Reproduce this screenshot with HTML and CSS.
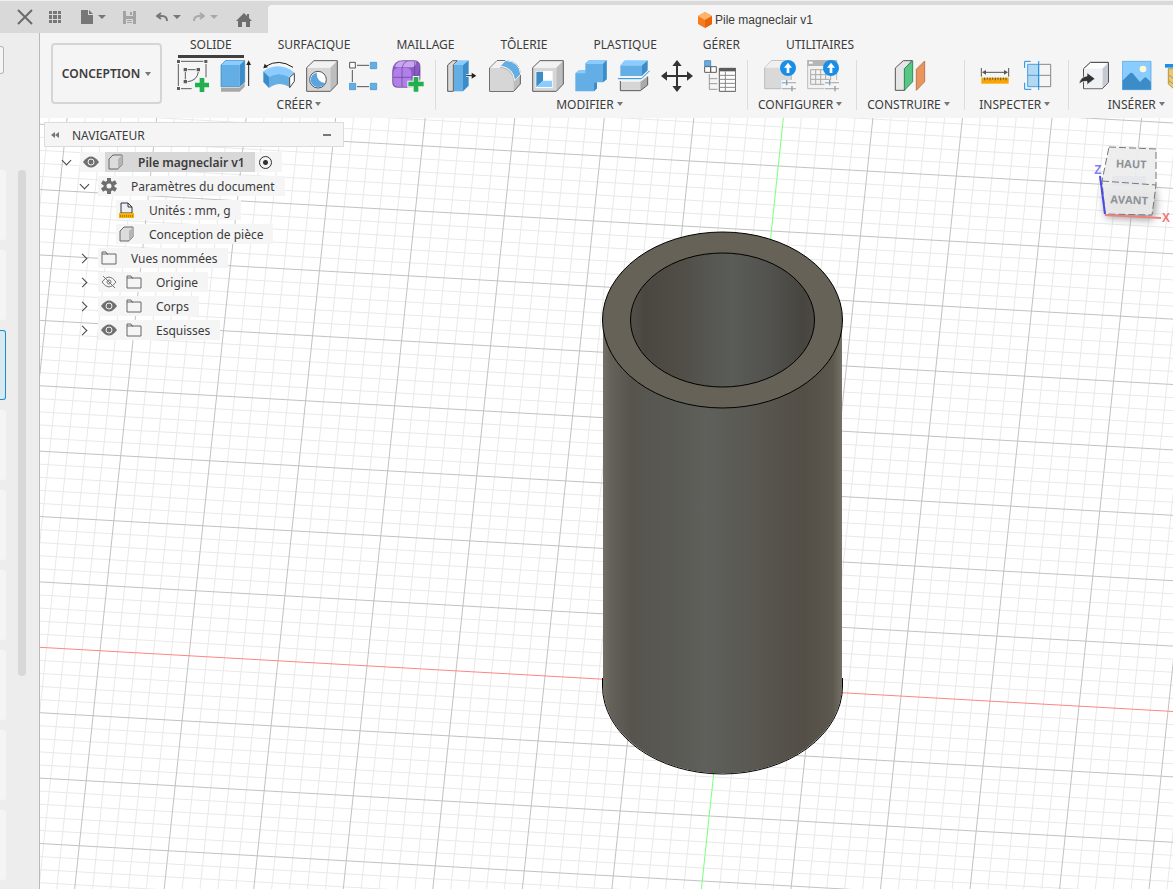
FILE: index.html
```html
<!DOCTYPE html>
<html lang="fr">

<head>
    <meta charset="UTF-8">
    <title>Pile magneclair v1</title>
    <link rel="stylesheet" href="styles.css">
</head>

<body>
    <header class="topbar">
        <div class="quick">
            <button class="quick-btn close" aria-label="Fermer"><svg width="16" height="16" viewBox="0 0 16 16"><path d="M1 1L15 15M15 1L1 15" fill="none" stroke="#6b6b6b" stroke-width="2"/></svg></button>
            <button class="quick-btn apps" aria-label="Applications"><svg width="14" height="14" viewBox="0 0 14 14"><path d="M1 1h3v3H1zM5 1h4v3H5zM10 1h3v3h-3zM1 5h3v4H1zM5 5h4v4H5zM10 5h3v4h-3zM1 10h3v3H1zM5 10h4v3H5zM10 10h3v3h-3z" fill="#777"/></svg></button>
            <button class="quick-btn file" aria-label="Fichier"><svg width="12" height="14" viewBox="0 0 12 14"><path d="M0 0h7v5h5v9H0zM8 0l4 4H8z" fill="#777"/></svg><i class="caret"></i></button>
            <button class="quick-btn save" aria-label="Enregistrer"><svg width="13" height="13" viewBox="0 0 13 13"><path d="M0 0h13v13H0z" fill="#a3a3a3"/><path d="M3 0h7v5H3zM3 8h7v5H3z" fill="#d9d9d9"/><path d="M7 1h2v3H7zM4 9h5v1H4zM4 11h5v1H4z" fill="#a3a3a3"/></svg></button>
            <button class="quick-btn undo" aria-label="Annuler"><svg width="12" height="10" viewBox="0 0 12 10"><path d="M5 1L1 4l4 3M1 4h5q5 0 5 5" fill="none" stroke="#777" stroke-width="2"/></svg><i class="caret"></i></button>
            <button class="quick-btn redo" aria-label="Rétablir"><svg width="12" height="10" viewBox="0 0 12 10"><path d="M7 1l4 3-4 3M11 4H6Q1 4 1 9" fill="none" stroke="#a8a8a8" stroke-width="2"/></svg><i class="caret light"></i></button>
            <button class="quick-btn home" aria-label="Accueil"><svg width="16" height="14" viewBox="0 0 16 14"><path d="M8 0l3 3V1h2v4l3 3h-2v6h-4V9H6v5H2V8H0z" fill="#6e6e6e"/></svg></button>
        </div>
        <div class="doc-tab">
            <svg width="14" height="16" viewBox="0 0 14 16"><path d="M7 0l7 4v8l-7 4-7-4V4z" fill="#f47b20"/><path d="M7 0l7 4-7 4-7-4z" fill="#ffb36b"/><path d="M7 8l7-4v8l-7 4z" fill="#e8630a"/></svg>
            <h1>Pile magneclair v1</h1>
        </div>
    </header>

    <div class="app">
        <aside class="data-panel">
            <input type="text" class="search" aria-label="Rechercher">
            <div class="files">
                <ul class="cards">
                    <li></li>
                    <li></li>
                    <li class="selected"></li>
                    <li></li>
                    <li></li>
                    <li></li>
                    <li></li>
                    <li></li>
                    <li></li>
                </ul>
                <div class="scroll"></div>
            </div>
        </aside>

        <main>
            <div class="toolbar">
                <button class="workspace">CONCEPTION <i class="caret"></i></button>
                <div class="ribbon">
                    <nav>
                        <button class="active">SOLIDE</button>
                        <button>SURFACIQUE</button>
                        <button>MAILLAGE</button>
                        <button>TÔLERIE</button>
                        <button>PLASTIQUE</button>
                        <button>GÉRER</button>
                        <button>UTILITAIRES</button>
                    </nav>
                    <div class="groups">
                        <section class="group">
                            <div class="tools">
                                <button aria-label="Créer une esquisse"><svg viewBox="0 0 96 96"><path d="M4 12v66M12 4h67M87 12v40M12 86h32M25 36v22M32 29h24M64 36q-4 26-32 29" fill="none" stroke="#5c5c5c" stroke-width="3"/><path d="M0 0h9v9H0zM82 0h9v9h-9zM0 81h9v9H0zM20 24h10v10H20zM59 24h10v10H59zM20 60h10v10H20z" fill="#5c5c5c"/><path d="M68 54h14v14h14v14H82v14H68V82H54V68h14z" fill="#22b04f"/></svg></button>
                                <button aria-label="Extrusion"><svg viewBox="0 0 96 96"><path d="M3 83h56l15-15v12L59 95H3z" fill="#a8a8a8"/><path d="M3 15h56v65H3z" fill="#64aee6"/><path d="M3 15L17 1h57L59 15z" fill="#8accff"/><path d="M59 15L74 1v65L59 80z" fill="#3c8cc8"/><path d="M3 80V15L17 1h57v65L59 80z" fill="none" stroke="#3580b8" stroke-width="2"/><path d="M86 78V14" stroke="#222" stroke-width="3"/><path d="M86 1l7 14H79z" fill="#222"/></svg></button>
                                <button aria-label="Révolution"><svg viewBox="0 0 96 96"><path d="M90 22Q48-6 8 19" fill="none" stroke="#222" stroke-width="3"/><path d="M1 25L5 11l10 11z" fill="#222"/><path d="M1 34Q48 2 95 38L78 50Q48 34 18 50z" fill="#8accff"/><path d="M18 50Q48 34 78 50v30Q48 62 18 84z" fill="#64aee6"/><path d="M1 34l17 16v34L1 66z" fill="#3c8cc8"/><path d="M80 52l14-12v24L80 83z" fill="#fff" stroke="#444" stroke-width="3"/></svg></button>
                                <button aria-label="Perçage"><svg viewBox="0 0 96 96"><path d="M2 23h71v71H2z" fill="#d6d6d6"/><path d="M2 23L24 2h70L73 23z" fill="#f2f2f2"/><path d="M73 23L94 2v70L73 94z" fill="#bdbdbd"/><path d="M2 94V23L24 2h70v70L73 94z" fill="none" stroke="#5c5c5c" stroke-width="3"/><circle cx="36" cy="59" r="25" fill="#fff" stroke="#555" stroke-width="3"/><path d="M32 38q0 28 26 32-8 12-24 11-18-3-20-21 1-18 18-22z" fill="#5aa5e0"/></svg></button>
                                <button aria-label="Réseau"><svg viewBox="0 0 96 96"><path d="M24 16h36M10 30v36M24 80h36" stroke="#555" stroke-width="3"/><path d="M2 7h17v17H2z" fill="#fff" stroke="#555" stroke-width="3"/><path d="M64 7h19v19H64zM1 70h19v19H1zM64 70h19v19H64z" fill="#64aee6" stroke="#3c8cc8" stroke-width="2"/></svg></button>
                                <button aria-label="Créer une forme"><svg viewBox="0 0 96 96"><path d="M2 34Q3 2 32 2h34q18 0 18 18v34q0 28-28 28H16Q2 82 2 66z" fill="#8b5cc4" stroke="#64408f" stroke-width="2"/><path d="M9 20Q14 4 32 4h32q10 0 8 6-2 12-14 12H18z" fill="#c9a6f2"/><rect x="4" y="24" width="54" height="56" rx="14" fill="#b07fea"/><path d="M30 24v56M4 52h54Q82 50 83 30M30 24Q32 8 46 3M68 6v66" fill="none" stroke="#64408f" stroke-width="2"/><path d="M62 48h20v14h14v21H82v13H62V83H46V62h16z" fill="#f5f5f5"/><path d="M65 51h14v14h16v14H79v16H65V79H49V65h16z" fill="#22b04f"/></svg></button>
                            </div>
                            <button class="menu">CRÉER<i class="caret"></i></button>
                        </section>
                        <section class="group">
                            <div class="tools">
                                <button aria-label="Appuyer/Tirer"><svg viewBox="0 0 96 96"><path d="M5 94V15L20 2h14L22 15v79z" fill="#d9d9d9" stroke="#5c5c5c" stroke-width="3"/><path d="M24 15h27v79H24z" fill="#64aee6"/><path d="M24 15L38 1h30L51 15z" fill="#8accff"/><path d="M51 15L68 1v76L51 94z" fill="#3c8cc8"/><path d="M60 47h20" stroke="#fff" stroke-width="8"/><path d="M60 47h20" stroke="#222" stroke-width="3"/><path d="M77 38l14 9-14 9z" fill="#222"/></svg></button>
                                <button aria-label="Congé"><svg viewBox="0 0 96 96"><path d="M2 94V24L24 2h28q42 4 42 42v28L74 94z" fill="#bdbdbd" stroke="#5c5c5c" stroke-width="3"/><path d="M3 24L24 3h22L32 24z" fill="#f2f2f2"/><path d="M3 24h30q40 4 41 46v23H3z" fill="#d6d6d6"/><path d="M34 18L50 1q42 4 45 42L77 62Q74 24 34 18z" fill="#64aee6" stroke="#f5f5f5" stroke-width="3"/></svg></button>
                                <button aria-label="Coque"><svg viewBox="0 0 96 96"><path d="M2 23h71v71H2z" fill="#d6d6d6"/><path d="M2 23L24 2h70L73 23z" fill="#f2f2f2"/><path d="M73 23L94 2v70L73 94z" fill="#bdbdbd"/><path d="M2 94V23L24 2h70v70L73 94z" fill="none" stroke="#5c5c5c" stroke-width="3"/><path d="M11 33h51v51H11z" fill="#fff"/><path d="M13 35h20v27L13 81z" fill="#3c8cc8"/><path d="M33 62h27v19H13z" fill="#8accff"/></svg></button>
                                <button aria-label="Combiner"><svg viewBox="0 0 96 96"><path d="M1 40l11-9h19V10L42 1h53v57L84 67H66v18l-9 9H1z" fill="#64aee6"/><path d="M1 40l11-9h19v9zM31 10L42 1h53L84 12H31z" fill="#8accff"/><path d="M84 12L95 1v57L84 67zM57 68h9v17l-9 9z" fill="#3c8cc8"/></svg></button>
                                <button aria-label="Scinder"><svg viewBox="0 0 96 96"><path d="M7 65h60v28H7z" fill="#d6d6d6"/><path d="M67 65l22-16v26L67 93z" fill="#aaa"/><path d="M7 63v29h60l22-17V50" fill="none" stroke="#5c5c5c" stroke-width="3"/><path d="M7 16L20 1h69L72 16z" fill="#8accff"/><path d="M7 16h65v32H7z" fill="#64aee6"/><path d="M72 16L89 1v31L72 48z" fill="#3c8cc8"/><path d="M0 56h71l24-24" fill="none" stroke="#f5f5f5" stroke-width="9"/><path d="M0 56h71l24-24" fill="none" stroke="#1a8ee6" stroke-width="3"/></svg></button>
                                <button aria-label="Déplacer"><svg viewBox="0 0 96 96"><path d="M48 14v68M14 48h68" stroke="#333" stroke-width="6"/><path d="M48 0l14 18H34zM48 96L34 78h28zM0 48l18-14v28zM96 48L78 62V34z" fill="#333"/></svg></button>
                                <button aria-label="Paramètres"><svg viewBox="0 0 96 96"><path d="M2 20h18v17H2zM20 20h17v17H20z" fill="#fff" stroke="#5c5c5c" stroke-width="3"/><path d="M2 2h18v17H2z" fill="#64aee6" stroke="#3c6c98" stroke-width="2"/><path d="M16 42v46M16 56h24M16 71h24M16 88h24" stroke="#999" stroke-width="3"/><path d="M46 25h49v69H46z" fill="#fff" stroke="#5c5c5c" stroke-width="3"/><path d="M46 24h49v10H46z" fill="#5c5c5c"/><path d="M46 46h48M46 58h48M46 70h48M46 82h48M64 34v60" stroke="#888" stroke-width="3"/></svg></button>
                            </div>
                            <button class="menu">MODIFIER<i class="caret"></i></button>
                        </section>
                        <section class="group">
                            <div class="tools">
                                <button aria-label="Configurer"><svg viewBox="0 0 96 96"><path d="M2 86V24L22 2h40v22h20v62z" fill="#d9d9d9" stroke="#bbb" stroke-width="3"/><path d="M3 23L22 3h40v20z" fill="#f0f0f0"/><path d="M52 60h44v36H52z" fill="#f5f5f5"/><path d="M54 68h42M54 86h42" stroke="#b5b5b5" stroke-width="4"/><path d="M54 68h14" stroke="#7cc0f5" stroke-width="4"/><path d="M68 60v16M84 78v16" stroke="#999" stroke-width="4"/><circle cx="72" cy="24" r="24" fill="#1a8ee6"/><path d="M72 8l12 15h-8v16h-8V23h-8z" fill="#fff"/></svg></button>
                                <button aria-label="Tableau de configuration"><svg viewBox="0 0 96 96"><path d="M2 2h87v84H2z" fill="#f2f2f2" stroke="#bbb" stroke-width="3"/><path d="M1 0h89v18H1z" fill="#b5b5b5"/><path d="M6 5h11v6H6z" fill="#fff"/><path d="M11 29h60v44H11zM11 44h60M11 58h60M26 29v44M41 29v44M56 29v44" fill="none" stroke="#aaa" stroke-width="3"/><path d="M52 60h44v36H52z" fill="#f5f5f5"/><path d="M54 68h42M54 86h42" stroke="#b5b5b5" stroke-width="4"/><path d="M54 68h14" stroke="#7cc0f5" stroke-width="4"/><path d="M68 60v16M84 78v16" stroke="#999" stroke-width="4"/><circle cx="72" cy="24" r="24" fill="#1a8ee6"/><path d="M72 8l12 15h-8v16h-8V23h-8z" fill="#fff"/></svg></button>
                            </div>
                            <button class="menu">CONFIGURER<i class="caret"></i></button>
                        </section>
                        <section class="group">
                            <div class="tools">
                                <button aria-label="Plan de décalage"><svg viewBox="0 0 96 96"><path d="M4 91V24L28 2h26L32 26v65z" fill="#e6e6e6" stroke="#555" stroke-width="3"/><path d="M31 26L56 2v63L31 91z" fill="#57c785" stroke="#36895a" stroke-width="3"/><path d="M67 28L92 3v62L67 91z" fill="#ea9560" stroke="#b97950" stroke-width="3"/></svg></button>
                            </div>
                            <button class="menu">CONSTRUIRE<i class="caret"></i></button>
                        </section>
                        <section class="group wide">
                            <div class="tools">
                                <button aria-label="Mesurer"><svg viewBox="0 0 96 96"><path d="M7 24v26M89 24v26M14 37h68" stroke="#555" stroke-width="3"/><path d="M9 37l12-7v14zM87 37l-12-7v14z" fill="#555"/><path d="M7 53h82v18H7z" fill="#f9a602"/><path d="M17 53v8M25 53v6M33 53v8M41 53v6M49 53v8M57 53v6M65 53v8M73 53v6M81 53v8" stroke="#555" stroke-width="3"/></svg></button>
                                <button aria-label="Analyse de section"><svg viewBox="0 0 96 96"><path d="M50 13h36v67H50M50 46h36" fill="none" stroke="#888" stroke-width="3"/><path d="M17 13h33v67H17z" fill="#b3d8f2" stroke="#4a9fdc" stroke-width="3"/><path d="M17 46h33" stroke="#4a9fdc" stroke-width="3"/><path d="M50 3v87M26 4H8v20M8 68v20h20" fill="none" stroke="#1a8ee6" stroke-width="3"/></svg></button>
                            </div>
                            <button class="menu">INSPECTER<i class="caret"></i></button>
                        </section>
                        <section class="group last">
                            <div class="tools">
                                <button aria-label="Insérer un composant"><svg viewBox="0 0 96 96"><path d="M14 86V26L34 7h54v60L70 86z" fill="#fff" stroke="#333" stroke-width="3"/><path d="M70 26L87 9v58L70 85z" fill="#c5c9d2"/><path d="M15 26h55v59H15z" fill="#f0f1f4"/><path d="M0 72Q4 50 24 48V38l24 18-24 18V64Q10 62 0 72z" fill="#333" stroke="#f5f5f5" stroke-width="2"/></svg></button>
                                <button aria-label="Insérer une image"><svg viewBox="0 0 96 96"><path d="M1 4h86v85H1z" fill="#8accff"/><path d="M1 62L24 40q4-4 8 0l22 26 12-12q4-4 8 0l13 12v23H1z" fill="#3c8cc8"/><path d="M1 4h86v85H1z" fill="none" stroke="#4a9fdc" stroke-width="2"/><circle cx="63" cy="27" r="10" fill="#fffad1"/></svg></button>
                                <button aria-label="Insérer McMaster-Carr"><svg viewBox="0 0 96 96"><path d="M10 26h70v46L60 90H30L10 72z" fill="#e8c877" stroke="#b89540" stroke-width="3"/><path d="M12 46l20 14M12 62l24 18" stroke="#b89540" stroke-width="3"/><path d="M0 12h90v11H0z" fill="#1a8ee6"/></svg></button>
                            </div>
                            <button class="menu">INSÉRER<i class="caret"></i></button>
                        </section>
                    </div>
                </div>
            </div>

            <div class="canvas">
                <svg class="scene" role="img" aria-label="Vue 3D">
                    <defs>
                        <linearGradient id="outside">
                            <stop offset="0" stop-color="#757166"/>
                            <stop offset=".03" stop-color="#65625a"/>
                            <stop offset=".12" stop-color="#57544e"/>
                            <stop offset=".3" stop-color="#5a5a54"/>
                            <stop offset=".43" stop-color="#5f605b"/>
                            <stop offset=".6" stop-color="#5a5953"/>
                            <stop offset=".84" stop-color="#534e46"/>
                            <stop offset=".96" stop-color="#5c584e"/>
                            <stop offset="1" stop-color="#757166"/>
                        </linearGradient>
                        <linearGradient id="inside">
                            <stop offset="0" stop-color="#53504a"/>
                            <stop offset=".08" stop-color="#4a4741"/>
                            <stop offset=".25" stop-color="#504c46"/>
                            <stop offset=".4" stop-color="#555550"/>
                            <stop offset=".55" stop-color="#5a5c58"/>
                            <stop offset=".75" stop-color="#52524e"/>
                            <stop offset=".94" stop-color="#474540"/>
                            <stop offset="1" stop-color="#4c4a45"/>
                        </linearGradient>
                    </defs>
                    <path class="minor" id="minor"/>
                    <path class="major" id="major"/>
                    <path class="axis-x" id="axisX"/>
                    <path class="axis-y" id="axisY"/>
                    <!-- the tube -->
                    <path d="M563 202V568A119 87 0 0 0 802 568V202z" fill="url(#outside)"/>
                    <path d="M562.500 560V568A120 88 0 0 0 802.500 568V560" class="edge"/>
                    <ellipse cx="682.500" cy="202" rx="120" ry="88" fill="#676257" class="edge"/>
                    <ellipse cx="682.500" cy="202" rx="92" ry="67" fill="url(#inside)" class="edge"/>
                </svg>

                <section class="browser">
                    <div class="browser-head">
                        <svg width="8" height="6" viewBox="0 0 8 6"><path d="M4 0v6L0 3zM8 0v6L4 3z" fill="#777"/></svg>
                        <h2>NAVIGATEUR</h2>
                        <button class="minimize" aria-label="Réduire"></button>
                    </div>
                    <ul class="tree">
                        <li class="level-0">
                            <button class="toggle open" aria-label="Replier"></button>
                            <div class="node root">
                                <svg class="eye" viewBox="0 0 16 12"><path d="M0 6Q8-5 16 6 8 17 0 6z" fill="#6f6f6f"/><circle cx="8" cy="6" r="3" fill="#6f6f6f" stroke="#f5f5f5"/></svg>
                                <label class="current" for="activate"><svg class="icon" viewBox="0 0 16 16"><path d="M1 5l4-4h9v10l-4 4H1z" fill="#dcdcdc" stroke="#666" stroke-linejoin="round"/><path d="M10 5l4-4v10l-4 4z" fill="#b5b5b5"/></svg>Pile magneclair v1</label>
                                <input type="radio" id="activate" checked>
                            </div>
                        </li>
                        <li class="level-1">
                            <button class="toggle open" aria-label="Replier"></button>
                            <div class="node"><svg class="icon" viewBox="0 0 16 16"><path d="M8 0v16M1 4l14 8M15 4L1 12" stroke="#6f6f6f" stroke-width="4"/><circle cx="8" cy="8" r="4" fill="#f5f5f5" stroke="#6f6f6f" stroke-width="3"/></svg>Paramètres du document</div>
                        </li>
                        <li class="level-2">
                            <div class="node"><svg class="icon" viewBox="0 0 16 16"><path d="M2 11V1h7l4 4v6z" fill="#eceff5" stroke="#333"/><path d="M9 1v4h4" fill="none" stroke="#333"/><path d="M0 11h15v5H0z" fill="#f4b400"/><path d="M1 14h13" stroke="#7a4c00" stroke-dasharray="1 1"/></svg>Unités : mm, g</div>
                        </li>
                        <li class="level-2">
                            <div class="node"><svg class="icon" viewBox="0 0 16 16"><path d="M1 5l4-4h9v10l-4 4H1z" fill="#dcdcdc" stroke="#666" stroke-linejoin="round"/><path d="M10 5l4-4v10l-4 4z" fill="#b5b5b5"/></svg>Conception de pièce</div>
                        </li>
                        <li class="level-1">
                            <button class="toggle" aria-label="Déplier"></button>
                            <div class="node"><svg class="icon" viewBox="0 0 16 16"><path d="M1 14V2h4l1 2h9v10z" fill="none" stroke="#666"/><path d="M1 4h6" stroke="#666"/></svg>Vues nommées</div>
                        </li>
                        <li class="level-1">
                            <button class="toggle" aria-label="Déplier"></button>
                            <div class="node"><svg class="eye" viewBox="0 0 16 12"><path d="M1 6Q8-4 15 6 8 16 1 6zM2 0l12 12" fill="none" stroke="#777"/><circle cx="8" cy="6" r="2" fill="none" stroke="#777"/></svg><svg class="icon" viewBox="0 0 16 16"><path d="M1 14V2h4l1 2h9v10z" fill="none" stroke="#666"/><path d="M1 4h6" stroke="#666"/></svg>Origine</div>
                        </li>
                        <li class="level-1">
                            <button class="toggle" aria-label="Déplier"></button>
                            <div class="node"><svg class="eye" viewBox="0 0 16 12"><path d="M0 6Q8-5 16 6 8 17 0 6z" fill="#6f6f6f"/><circle cx="8" cy="6" r="3" fill="#6f6f6f" stroke="#f5f5f5"/></svg><svg class="icon" viewBox="0 0 16 16"><path d="M1 14V2h4l1 2h9v10z" fill="none" stroke="#666"/><path d="M1 4h6" stroke="#666"/></svg>Corps</div>
                        </li>
                        <li class="level-1">
                            <button class="toggle" aria-label="Déplier"></button>
                            <div class="node"><svg class="eye" viewBox="0 0 16 12"><path d="M0 6Q8-5 16 6 8 17 0 6z" fill="#6f6f6f"/><circle cx="8" cy="6" r="3" fill="#6f6f6f" stroke="#f5f5f5"/></svg><svg class="icon" viewBox="0 0 16 16"><path d="M1 14V2h4l1 2h9v10z" fill="none" stroke="#666"/><path d="M1 4h6" stroke="#666"/></svg>Esquisses</div>
                        </li>
                    </ul>
                </section>

                <svg class="viewcube" width="83" height="90" viewBox="0 0 83 90">
                    <path class="cube-shadow" d="M14 50l51-2 1 20-4 12-46-3z"/>
                    <path d="M19 7l47 2v36l-4 30-47-1-3-33z" fill="#ededed" fill-opacity=".92"/>
                    <path d="M22 36h34v10H22z" fill="#e6e8ec"/>
                    <path d="M19 7l47 2v36l-4 30-47-1-3-33zM12 41l54 4" fill="none" stroke="#777" stroke-dasharray="7 3"/>
                    <path d="M15 75l56 3" stroke="#f08080" stroke-width="2"/>
                    <path d="M10 36l5 38" stroke="#4a4ae8" stroke-width="2"/>
                    <text x="41" y="28" class="face" transform="rotate(2 41 28)">HAUT</text>
                    <text x="39" y="64" class="face" transform="rotate(2 39 64)">AVANT</text>
                    <text x="8" y="34" class="axis-label z">Z</text>
                    <text x="76" y="82" class="axis-label x">X</text>
                </svg>
            </div>
        </main>
    </div>

    <script>
        // One grid square, as screen vectors, from the origin of the scene
        const origin = [683, 568];
        const u = [89, 5.04];
        const v = [-6.91, 65];

        function point(a, b) {
            return (origin[0] + a * u[0] + b * v[0]).toFixed(1) + " " + (origin[1] + a * u[1] + b * v[1]).toFixed(1);
        }

        function line(a1, b1, a2, b2) {
            return "M" + point(a1, b1) + "L" + point(a2, b2);
        }

        let minor = "";
        let major = "";
        for (let i = -150; i <= 150; i++) {
            if (i == 0) continue;
            const lines = line(i / 5, -30, i / 5, 30) + line(-30, i / 5, 30, i / 5);
            if (i % 5 == 0) {
                major += lines;
            } else {
                minor += lines;
            }
        }
        document.querySelector("#minor").setAttribute("d", minor);
        document.querySelector("#major").setAttribute("d", major);
        document.querySelector("#axisX").setAttribute("d", line(-30, 0, 30, 0));
        document.querySelector("#axisY").setAttribute("d", line(0, -30, 0, 30));
    </script>
</body>

</html>
```
FILE: styles.css
```css
* {
    box-sizing: border-box;
}

body {
    margin: 0;
    height: 100vh;
    display: flex;
    flex-direction: column;
    overflow: hidden;
    background: #f5f5f5;
    color: #3c3c3c;
    font-family: "Noto Sans", sans-serif;
    font-size: 12px;
}

button {
    display: flex;
    align-items: center;
    justify-content: center;
    padding: 0;
    border: 0;
    background: none;
    color: inherit;
    font: inherit;
}

ul {
    list-style: none;
    margin: 0;
    padding: 0;
}

.caret {
    flex: none;
    border: 4px solid transparent;
    border-top: 4px solid #777;
    border-bottom: 0;
}

.caret.light {
    border-top-color: #a8a8a8;
}

/* top bar */

.topbar {
    display: flex;
    flex: none;
    height: 33px;
    border-top: 1px solid #f0f0f0;
    background: #d9d9d9;
}

.quick {
    display: flex;
    align-items: center;
    width: 268px;
    padding-left: 17px;
}

.quick-btn {
    gap: 5px;
}

.apps {
    margin-left: 15px;
}

.file {
    margin-left: 19px;
}

.save {
    margin-left: 17px;
}

.undo {
    margin-left: 20px;
}

.redo {
    margin-left: 12px;
}

.home {
    margin-left: 18px;
    padding-top: 6px;
}

.doc-tab {
    display: flex;
    flex: 1;
    align-items: center;
    justify-content: center;
    gap: 3px;
    margin-top: 4px;
    padding: 1px 150px 0 220px;
    border-top-left-radius: 4px;
    background: #f5f5f5;
}

.doc-tab h1 {
    margin: 0;
    font-family: "Liberation Sans", sans-serif;
    font-size: 12px;
    font-weight: 400;
}

.app {
    display: flex;
    flex: 1;
    min-height: 0;
}

/* data panel, mostly off screen */

.data-panel {
    flex: none;
    width: 40px;
    border-right: 1px solid #b8b8b8;
    background: #ededed;
    overflow: hidden;
}

.search {
    display: block;
    width: 4px;
    height: 28px;
    margin-top: 13px;
    padding: 0;
    border: 1px solid #b5b5b5;
    border-left: 0;
    border-radius: 0 3px 3px 0;
    background: #f5f5f5;
}

.files {
    display: flex;
    gap: 12px;
    margin-top: 96px;
}

.cards li {
    width: 6px;
    height: 70px;
    margin-bottom: 10px;
    border: 1px solid #f5f5f5;
    border-left: 0;
    border-radius: 0 3px 3px 0;
    background: #f5f5f5;
}

.cards .selected {
    border-color: #1a8ec8;
    background: #d9e9f2;
}

.scroll {
    width: 8px;
    height: 506px;
    border-radius: 4px;
    background: #d8d8d8;
}

main {
    display: flex;
    flex: 1;
    flex-direction: column;
    min-width: 0;
}

/* toolbar */

.toolbar {
    display: flex;
    flex: none;
    height: 85px;
    padding-left: 11px;
    overflow: hidden;
}

.workspace {
    flex: none;
    gap: 5px;
    width: 111px;
    height: 61px;
    margin-top: 10px;
    border: 2px solid #d5d5d5;
    border-radius: 4px;
    font-weight: 600;
}

.workspace .caret,
.menu .caret {
    border-width: 4px 3px 0;
}

.ribbon {
    flex: none;
    padding-left: 5px;
}

nav {
    display: flex;
    gap: 22px;
    padding-left: 11px;
}

nav button {
    height: 25px;
    padding: 0 12px;
    border-bottom: 3px solid transparent;
}

nav button.active {
    border-color: #404040;
}

.groups {
    display: flex;
    margin-top: 2px;
}

.group {
    display: flex;
    flex-direction: column;
    align-items: center;
    padding: 0 11px 0 10px;
    border-right: 1px solid #dcdcdc;
    height: 50px;
}

.group.wide {
    padding: 0 14px;
}

.group.last {
    border: 0;
}

.tools {
    display: flex;
    gap: 11px;
}

.tools svg {
    display: block;
    width: 32px;
    height: 32px;
}

.menu {
    flex: none;
    gap: 3px;
    height: 24px;
    margin-right: 3px;
}

/* 3D view */

.canvas {
    position: relative;
    flex: 1;
    min-height: 0;
    overflow: hidden;
    background: white;
}

.scene {
    position: absolute;
    width: 100%;
    height: 100%;
}

.minor,
.major,
.axis-x,
.axis-y {
    fill: none;
}

.minor {
    stroke: #e9e9e9;
}

.major {
    stroke: #c2c2c2;
}

.axis-x {
    stroke: #ff8585;
}

.axis-y {
    stroke: #7dff7d;
}

.edge {
    stroke: black;
}

path.edge {
    fill: none;
}

.viewcube {
    position: absolute;
    top: 22px;
    right: 0;
}

.cube-shadow {
    fill: #999;
    filter: blur(4px);
}

.face {
    fill: #8d9298;
    font: bold 11px "Open Sans", sans-serif;
    text-anchor: middle;
}

.axis-label {
    font: bold 12px "Liberation Sans", sans-serif;
    text-anchor: middle;
}

.axis-label.z {
    fill: #8080f5;
}

.axis-label.x {
    fill: #f57878;
}

/* browser tree */

.browser {
    position: relative;
    width: 300px;
    margin: 4px 0 0 4px;
}

.browser-head {
    display: flex;
    align-items: center;
    height: 25px;
    padding: 1px 12px 0 6px;
    border: 1px solid #dcdcdc;
    background: #f5f5f5;
}

.browser-head h2 {
    flex: 1;
    margin: 0 0 0 13px;
    font-size: 12px;
    font-weight: 400;
}

.minimize {
    width: 8px;
    height: 2px;
    background: #777;
}

.tree {
    padding-top: 3px;
}

.tree li {
    display: flex;
    align-items: center;
    height: 24px;
}

.level-0 {
    padding-left: 16px;
}

.level-1 {
    padding-left: 34px;
}

.level-2 {
    padding-left: 72px;
}

.toggle {
    width: 12px;
    height: 12px;
    margin-right: 8px;
}

.toggle::before {
    content: "";
    width: 6px;
    height: 6px;
    border: solid #444;
    border-width: 1px 1px 0 0;
    transform: translateX(-2px) rotate(45deg);
}

.toggle.open::before {
    transform: translateY(-2px) rotate(135deg);
}

.node {
    display: flex;
    align-items: center;
    height: 20px;
    padding: 0 10px 0 3px;
    background: #f5f5f5;
}

.icon {
    width: 16px;
    height: 16px;
    margin-right: 14px;
}

.eye {
    width: 16px;
    height: 12px;
}

.eye + .icon {
    margin-left: 9px;
}

.current {
    display: flex;
    align-items: center;
    height: 20px;
    margin: 0 4px 0 6px;
    padding: 0 10px 0 3px;
    background: #d8d8d8;
    font-weight: 600;
}

.node input {
    appearance: none;
    width: 13px;
    height: 13px;
    margin: 0;
    border: 1px solid #333;
    border-radius: 50%;
    background: radial-gradient(#333 2px, transparent 3px);
}
```
